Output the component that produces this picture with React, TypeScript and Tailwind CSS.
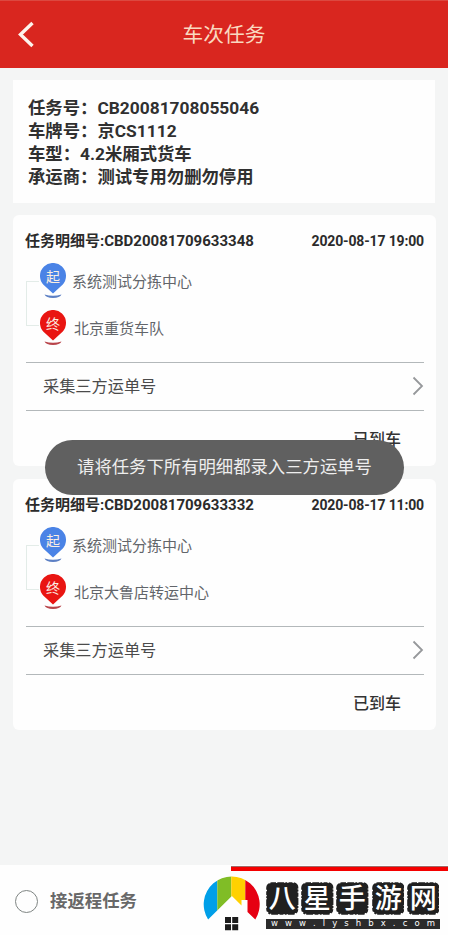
import React from 'react';

type Detail = { no: string; time: string; from: string; to: string };

const details: Detail[] = [
  { no: 'CBD20081709633348', time: '2020-08-17 19:00', from: '系统测试分拣中心', to: '北京重货车队' },
  { no: 'CBD20081709633332', time: '2020-08-17 11:00', from: '系统测试分拣中心', to: '北京大鲁店转运中心' },
];

const info = [
  ['任务号', 'CB20081708055046'],
  ['车牌号', '京CS1112'],
  ['车型', '4.2米厢式货车'],
  ['承运商', '测试专用勿删勿停用'],
];

// 起 / 终 标记
function Pin({ label, color, arc }: { label: string; color: string; arc: string }) {
  return (
    <svg width="28" height="37" viewBox="0 0 28 37" className="block shrink-0">
      <path d="M14 30.5 L4.2 21.5 A13 13 0 1 1 23.8 21.5 Z" fill={color} />
      <path d="M5.5 31.6 Q14 34 22.5 31.6 Q21 35 14 35 Q7 35 5.5 31.6 Z" fill={arc} />
      <text x="14" y="18.5" textAnchor="middle" fontSize="14" fill="#fbeee2">
        {label}
      </text>
    </svg>
  );
}

function DetailCard({ item }: { item: Detail }) {
  return (
    <section className="h-[251px] w-[423px] rounded-md bg-[#fefefe] pl-[13px] pr-3">
      <div className="flex h-[48px] items-center justify-between pt-1 text-[15px] font-bold text-[#2b2b2b]">
        <span className="-ml-px whitespace-nowrap">
          任务明细号:{item.no}
        </span>
        <span className="whitespace-nowrap text-[14px] tracking-[-0.15px]">{item.time}</span>
      </div>
      <div className="flex h-[99px]">
        <div className="mt-[18px] h-[45px] w-[13px] shrink-0 border border-r-0 border-[#e3ece8]" />
        <div className="text-[15px] text-[#62656a]">
          <div className="flex h-[47px]">
            <Pin label="起" color="#4a83e6" arc="#5d80c4" />
            <span className="ml-[5px] mt-[8px] leading-[22px]">{item.from}</span>
          </div>
          <div className="flex h-[47px]">
            <Pin label="终" color="#e91512" arc="#b8444a" />
            <span className="ml-[7px] mt-[8px] leading-[22px]">{item.to}</span>
          </div>
        </div>
      </div>
      <div className="flex h-[49px] items-center justify-between border-y border-[#b3b8ba] pl-[17px] text-[16.2px] text-[#4b4b4b]">
        <span className="pt-[2px]">采集三方运单号</span>
        <svg width="12" height="20" viewBox="0 0 12 20" className="mb-[2px]">
          <path d="M1.5 1.5 L10 10 L1.5 18.5" fill="none" stroke="#96989b" strokeWidth="1.8" />
        </svg>
      </div>
      <div className="flex h-[55px] items-center justify-end pr-[23px] pt-[2px] text-[16px] font-medium text-[#333]">
        已到车
      </div>
    </section>
  );
}

function SiteLogo() {
  return (
    <div className="mt-[5px] flex">
      <svg width="62" height="58" viewBox="0 0 62 58" className="block shrink-0">
        <defs>
          <clipPath id="roof">
            <path d="M5.1 43.5 A28 28 0 1 1 52.3 43.5 L44.5 36 V24 H38.5 V29.5 L28.9 20 Z" />
          </clipPath>
        </defs>
        <g clipPath="url(#roof)">
          <rect x="0" width="14.3" height="58" fill="#009fe8" />
          <rect x="14.3" width="14" height="58" fill="#80bd26" />
          <rect x="28.3" width="14" height="58" fill="#ffd100" />
          <rect x="42.3" width="20" height="58" fill="#e60012" />
        </g>
        <path d="M22 41h6v6h-6z M29.2 41h6v6h-6z M22 48.2h6v6h-6z M29.2 48.2h6v6h-6z" fill="#1c1c1c" />
      </svg>
      <div className="ml-[1px] w-[174px] pt-[6px]">
        <div className="flex gap-[2.6px]">
          {['八', '星', '手', '游', '网'].map((c) => (
            <svg key={c} width="32.6" height="33" viewBox="0 0 32.6 33" className="block shrink-0">
              <rect x="1" y="1" width="30.6" height="31" rx="5" fill="#202020" />
              <rect
                x="1"
                y="1"
                width="30.6"
                height="31"
                rx="5"
                fill="none"
                stroke="#202020"
                strokeWidth="1.6"
                strokeDasharray="4 1.3 7 1 2 1.2"
              />
              <text x="16.3" y="26" textAnchor="middle" fontSize="27" fontWeight="500" fill="#fff">
                {c}
              </text>
            </svg>
          ))}
        </div>
        <div className="mt-[4px] flex h-[10px] items-center justify-between bg-[#2b2b2b] px-[5px] font-['DejaVu_Sans',sans-serif] text-[8.5px] leading-none text-white">
          {'www.lyshbx.com'.split('').map((c, i) => (
            <span key={i} className="-mt-[2px]">{c}</span>
          ))}
        </div>
      </div>
    </div>
  );
}

export default function App() {
  return (
    <div className="relative h-[935px] w-[450px] overflow-hidden bg-white font-['Roboto','Noto_Sans_CJK_SC',sans-serif]">
      <div className="flex h-full w-[448px] flex-col bg-[#f4f5f5]">
        <header className="flex h-[68px] shrink-0 items-center border-t border-[#dc4840] bg-[#d9261f]">
          <svg width="60" height="68" viewBox="0 0 60 68" className="block">
            <path d="M32.5 22 L20.5 33.5 L32.5 45" fill="none" stroke="#fdf3ec" strokeWidth="3.4" />
          </svg>
          <h1 className="mr-[60px] flex-1 pt-[3px] text-center text-[20.7px] text-[#f9d9c0]">车次任务</h1>
        </header>

        <main className="flex flex-1 flex-col pl-[13px] pt-3">
          <section className="h-[123px] w-[422px] bg-[#fefefe] pl-[15px] pt-[17px] text-[17.35px] font-bold leading-[23px] text-[#303030]">
            {info.map(([k, v]) => (
              <p key={k}>
                {k}：{v}
              </p>
            ))}
          </section>
          <div className="mt-3 flex flex-col gap-[13px]">
            {details.map((d) => (
              <DetailCard key={d.no} item={d} />
            ))}
          </div>
        </main>

        <footer className="flex h-[70px] shrink-0 bg-[#fefefe]">
          <div className="flex w-[203px] items-center pl-[15px] pt-[2px]">
            <span className="size-[23px] rounded-full border-[1.5px] border-[#7f8583]" />
            <span className="ml-3 text-[17.4px] font-bold text-[#686868]">接返程任务</span>
          </div>
          <div className="flex-1 pt-[1px]">
            <div className="ml-[28px] h-[5px] border-t border-[#a06a68] bg-[#f40000]" />
            <SiteLogo />
          </div>
        </footer>
      </div>

      {/* toast */}
      <div className="absolute left-[45px] top-[440px] flex h-[55px] w-[359px] items-center justify-center rounded-full bg-[#606060] text-[17.35px] text-[#eeeeee]">
        请将任务下所有明细都录入三方运单号
      </div>
    </div>
  );
}
